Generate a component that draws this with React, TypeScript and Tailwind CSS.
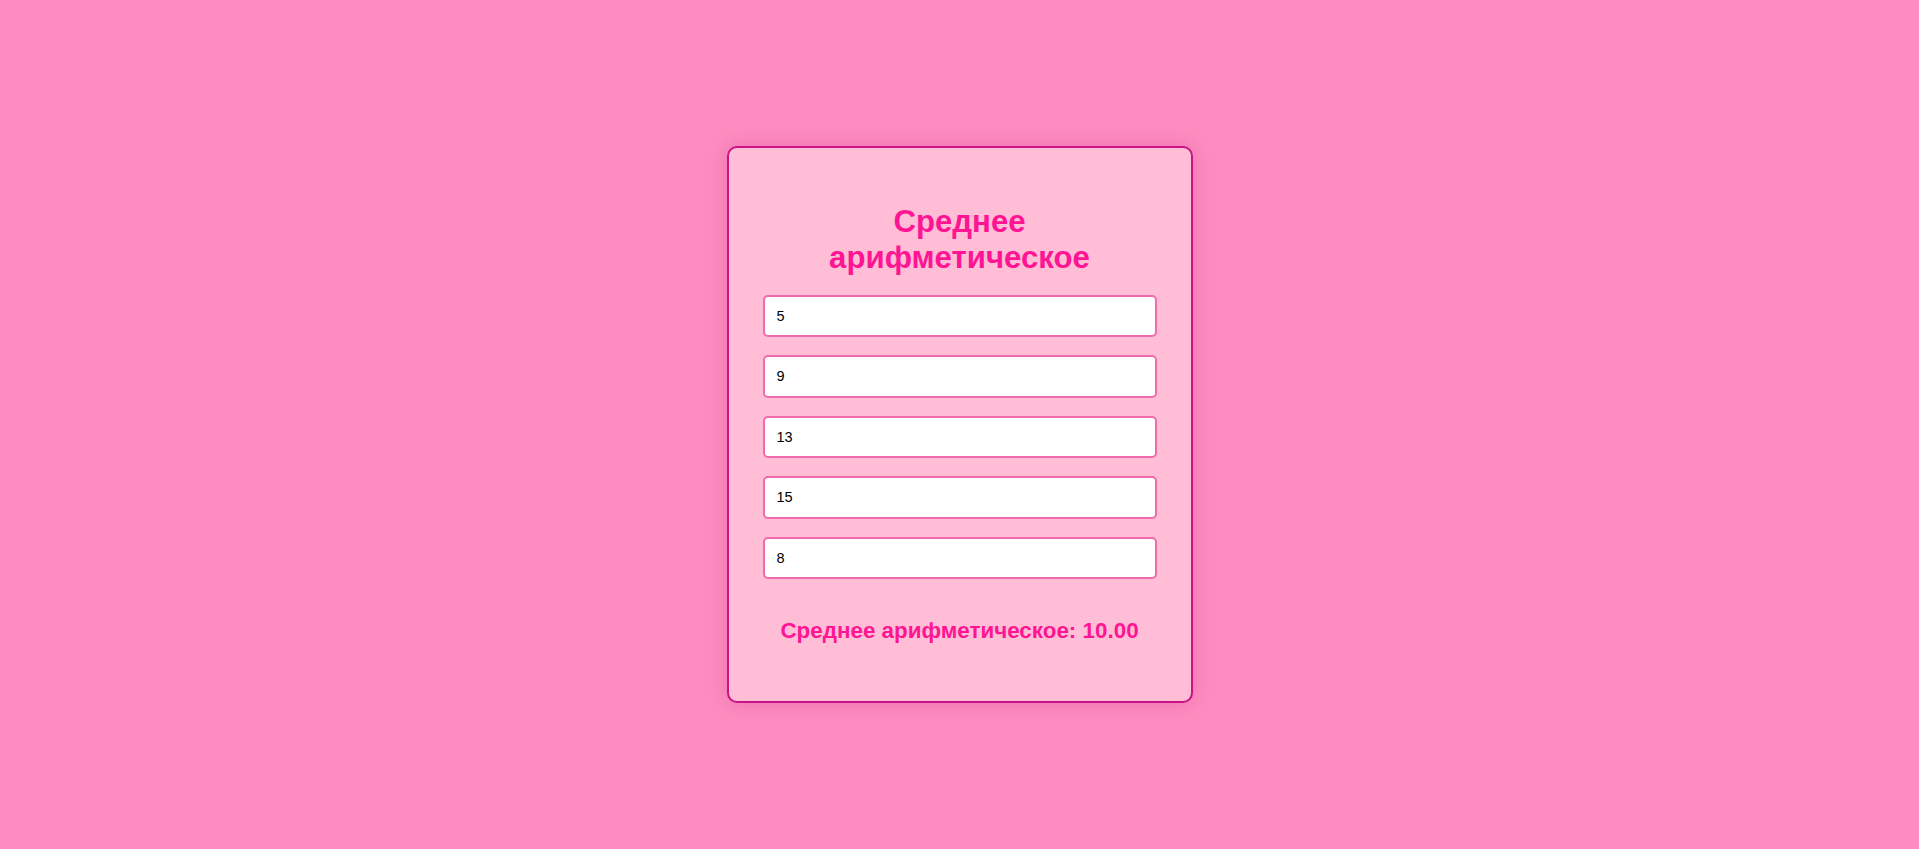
import { useState } from "react";

const START = ["5", "9", "13", "15", "8"];

export default function App() {
  const [values, setValues] = useState<string[]>(START);

  const nums = values.map((v) => parseFloat(v)).filter((n) => !isNaN(n));
  const mean = nums.length ? nums.reduce((a, b) => a + b, 0) / nums.length : 0;

  function update(i: number, v: string) {
    setValues((prev) => prev.map((p, j) => (j === i ? v : p)));
  }

  return (
    <div className="flex min-h-screen items-center justify-center bg-[#fd8dc0] font-['Liberation_Sans',Arial,sans-serif]">
      <div className="flex h-[557px] w-[466px] flex-col rounded-[10px] border-2 border-[#c71585] bg-[#ffbed6] px-[34px] pt-[56px] shadow-[0_0_20px_rgba(199,21,133,0.25)]">
        <h1 className="text-center text-[31.2px] leading-[36px] font-bold text-[#ff1493]">
          Среднее
          <br />
          арифметическое
        </h1>
        <div className="mt-[18.5px] flex flex-col gap-[18px]">
          {values.map((v, i) => (
            <input
              key={i}
              type="text"
              value={v}
              onChange={(e) => update(i, e.target.value)}
              className="h-[42.5px] w-full rounded-[5px] border-2 border-[#f06aae] bg-white px-[12px] text-[14.5px] text-black outline-none"
            />
          ))}
        </div>
        <h2 className="mt-[38.5px] text-center text-[22.4px] leading-[25.8px] font-bold text-[#ff1493]">
          Среднее арифметическое: {mean.toFixed(2)}
        </h2>
      </div>
    </div>
  );
}
